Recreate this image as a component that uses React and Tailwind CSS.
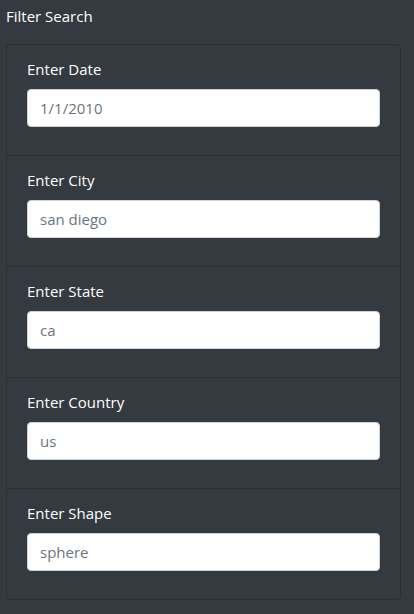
import React from 'react';

const fields = [
    { label: 'Enter Date', placeholder: '1/1/2010' },
    { label: 'Enter City', placeholder: 'san diego' },
    { label: 'Enter State', placeholder: 'ca' },
    { label: 'Enter Country', placeholder: 'us' },
    { label: 'Enter Shape', placeholder: 'sphere' },
];

export default function App() {
    return (
        <div className="min-h-screen w-full bg-[#343a40] text-white font-['Open_Sans',sans-serif]">
            <div className="pl-[6px] pt-[4px] text-[15px] leading-6">Filter Search</div>

            {/* list group */}
            <ul className="mt-[16px] ml-[6px] w-[395px] rounded-[4px] border border-[#2b3035]">
                {fields.map((f, i) => (
                    <li
                        key={f.label}
                        className={`px-5 pt-3 pb-3 ${i > 0 ? 'border-t border-[#2b3035]' : ''}`}
                    >
                        <div className="mb-4">
                            <label className="block text-[15px] leading-6 mb-2">{f.label}</label>
                            <input
                                type="text"
                                placeholder={f.placeholder}
                                className="block w-full h-[38px] rounded-[4px] border border-[#ced4da] bg-white px-3 text-[15px] text-[#495057] placeholder:text-[#6c757d] outline-none"
                            />
                        </div>
                    </li>
                ))}
            </ul>
        </div>
    );
}
